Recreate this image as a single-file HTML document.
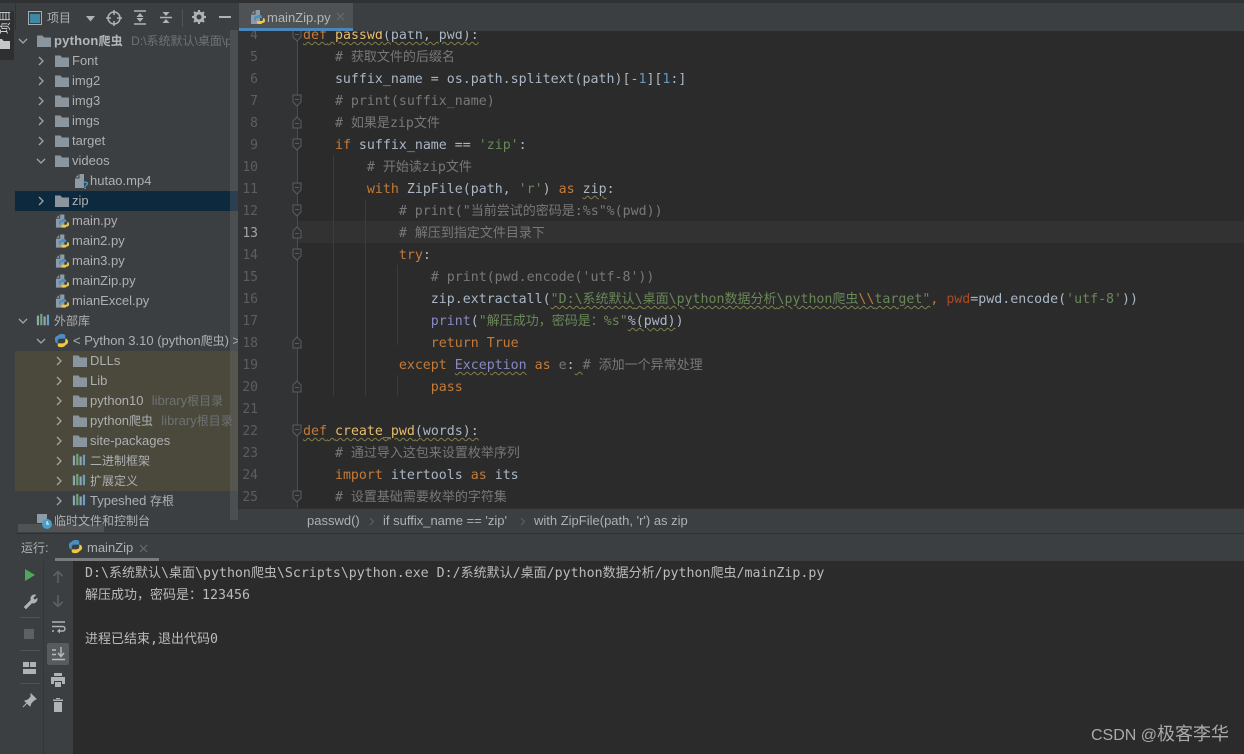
<!DOCTYPE html>
<html lang="zh"><head><meta charset="utf-8"><style>
html,body{margin:0;padding:0;background:#2b2b2b}
#a{position:relative;width:1244px;height:754px;overflow:hidden;background:#2b2b2b;font-family:"Liberation Sans","Noto Sans CJK SC",sans-serif;filter:blur(.25px)}
.b{position:absolute}
.t{position:absolute;height:20px;line-height:20px;font-size:13px;color:#aeb0b2;white-space:nowrap}
.t s{color:#6f7274;text-decoration:none;margin-left:1px}
.t i{font-style:normal;font-size:12px;line-height:0;font-family:"Noto Sans CJK SC",sans-serif}
.l{position:absolute;height:22px;line-height:22px;left:303px;margin-top:1px;font-family:"DejaVu Sans Mono","Liberation Mono","Noto Sans CJK SC",monospace;font-size:13.28px;color:#a9b7c6;white-space:pre}
.l i{font-style:normal;font-size:13px;line-height:0;font-family:"Noto Sans CJK SC",sans-serif}
.n{position:absolute;left:238px;width:20px;text-align:right;height:22px;line-height:22px;margin-top:1px;font-family:"DejaVu Sans Mono",monospace;font-size:13px;color:#5c5e60}
.k{color:#c47a38}.c{color:#787878}.s{color:#6a8759}.f{color:#e8bd6c}.p{color:#8888c6}.u{color:#6897bb}.w{text-decoration:underline wavy #7f7f4c 1px;text-underline-offset:2px}.q{color:#aa4926}
svg{position:absolute;overflow:visible}
.g{position:absolute;width:1px;background:#3c3c3c}
.con{position:absolute;left:85px;height:22px;line-height:22px;margin-top:2px;font-family:"DejaVu Sans Mono","Liberation Mono",monospace;font-size:13.28px;color:#bbbbbb;white-space:pre}
.con i{font-style:normal;font-size:13px;line-height:0;font-family:"Noto Sans CJK SC",sans-serif}
</style></head><body><div id="a">
<svg width="0" height="0" style="position:absolute"><defs>
<symbol id="fo" viewBox="0 0 16 16"><path d="M1 2.500h5.500l1.500 2h7v9.500H1z" fill="#8a959e"/></symbol>
<symbol id="ch" viewBox="0 0 10 10"><path d="M3 1l4 4-4 4" fill="none" stroke="#a2a4a6" stroke-width="1.300"/></symbol>
<symbol id="dn" viewBox="0 0 10 10"><path d="M1 3l4 4 4-4" fill="none" stroke="#a2a4a6" stroke-width="1.300"/></symbol>
<symbol id="py" viewBox="0 0 16 16"><path d="M1 5l4-4h5v14H1z" fill="#8d9ba6"/><path d="M5 1v4H1" fill="none" stroke="#3c3f41"/><path d="M9 6c3 0 3 1 3 2v1H8c-2 0-2 1-2 2v1c-2 0-2-2-2-3s1-2 3-2V7c0-1 1-1 2-1z" fill="#4a8ec2"/><path d="M10 15c-3 0-3-1-3-2v-1h4c2 0 2-1 2-2V9c2 0 2 2 2 3s-1 2-3 2v0c0 1-1 1-2 1z" fill="#f0c840"/></symbol>
<symbol id="lg" viewBox="0 0 16 16"><path d="M8 1c4 0 4 1 4 2v3H7c-3 0-3 2-3 3v2c-3 0-3-3-3-5s2-3 3-3V3c0-1 2-2 4-2z" fill="#4a8ec2"/><path d="M8 15c-4 0-4-1-4-2v-2h5c3 0 3-2 3-3V6c3 0 3 3 3 4s-2 3-3 3v0c0 1-2 2-4 2z" fill="#f0c840"/></symbol>
<symbol id="li" viewBox="0 0 16 16"><rect x="1" y="3" width="2.500" height="11" fill="#8fa5b5"/><rect x="4.800" y="1" width="2.500" height="13" fill="#6fa57a"/><rect x="8.600" y="4" width="2.500" height="10" fill="#8fa5b5"/><rect x="12.400" y="2" width="2.500" height="12" fill="#6a9fc0"/></symbol>
<symbol id="fm" viewBox="0 0 10 14"><path d="M1 1h8v7l-4 4-4-4z" fill="#2f3032" stroke="#5a5c5e"/><path d="M3 5.500h4" stroke="#5a5c5e"/></symbol>
<symbol id="fu" viewBox="0 0 10 14"><path d="M1 13h8V6L5 2 1 6z" fill="#2f3032" stroke="#5a5c5e"/><path d="M3 8.500h4" stroke="#5a5c5e"/></symbol>
</defs></svg>

<div class="b" style="left:0;top:0;width:1244px;height:3px;background:#2f3133"></div>
<div class="b" style="left:0;top:3px;width:238px;height:27px;background:#3c3f41"></div>
<div class="b" style="left:238px;top:3px;width:1006px;height:27px;background:#3c3f41"></div>
<div class="b" style="left:0;top:3px;width:15px;height:751px;background:#3c3f41;border-right:1px solid #323232"></div>
<div class="b" style="left:0;top:11px;width:14px;height:49px;background:#2d2f31;overflow:hidden">
<div class="b" style="left:-7px;top:5px;width:24px;height:12px;font-size:12px;line-height:12px;color:#d0d2d4;transform:rotate(-90deg);white-space:nowrap;font-family:'Noto Sans CJK SC',sans-serif">项目</div>
<svg style="left:-4px;top:27px" width="14" height="12"><path d="M0 1h6l1.500 2H14v8H0z" fill="#c4c6c8"/></svg>
</div>

<div class="b" style="left:15px;top:30px;width:223px;height:503px;background:#3c3f41"></div>
<div class="b" style="left:15px;top:191px;width:223px;height:20px;background:#0d293e"></div>
<div class="b" style="left:15px;top:351px;width:223px;height:140px;background:#4a493c"></div>
<div class="b" style="left:230px;top:30px;width:8px;height:490px;background:rgba(120,122,124,.28)"></div>
<div class="b" style="left:18px;top:524px;width:86px;height:8px;background:#505254"></div>

<!-- toolbar -->
<svg style="left:28px;top:11px" width="14" height="14"><rect x=".5" y=".5" width="13" height="13" fill="none" stroke="#a9abad"/><rect x="2" y="3" width="10" height="9" fill="#3d88a5"/></svg>
<div class="t" style="left:47px;top:8px"><i>项目</i></div>
<svg style="left:85px;top:15px" width="11" height="7"><path d="M1 1h9L5.500 6.500z" fill="#b0b2b4"/></svg>
<svg style="left:106px;top:10px" width="16" height="16"><circle cx="8" cy="8" r="6" fill="none" stroke="#b0b2b4" stroke-width="1.500"/><path d="M8 0v5M8 11v5M0 8h5M11 8h5" stroke="#b0b2b4" stroke-width="1.500"/></svg>
<svg style="left:133px;top:10px" width="14" height="15"><path d="M1 1h12M1 14h12" stroke="#b0b2b4" stroke-width="1.500"/><path d="M7 3L3.500 7h7zM7 12L3.500 8h7z" fill="#b0b2b4"/></svg>
<svg style="left:159px;top:10px" width="14" height="15"><path d="M1 7.500h12" stroke="#b0b2b4" stroke-width="1.500"/><path d="M7 6L3.500 2h7zM7 9L3.500 13h7z" fill="#b0b2b4"/></svg>
<div class="b" style="left:182px;top:9px;width:1px;height:18px;background:#505254"></div>
<svg style="left:192px;top:10px" width="14" height="14"><circle cx="7" cy="7" r="4" fill="none" stroke="#b0b2b4" stroke-width="3"/><path d="M7 0v3M7 11v3M0 7h3M11 7h3M2 2l2 2M10 10l2 2M2 12l2-2M10 4l2-2" stroke="#b0b2b4" stroke-width="2"/></svg>
<div class="b" style="left:219px;top:16px;width:12px;height:2px;background:#b0b2b4"></div>

<!-- tree -->
<svg style="left:18px;top:36px" width="10" height="10"><use href="#dn"/></svg>
<svg style="left:36px;top:33px" width="16" height="16"><use href="#fo"/></svg>
<div class="t" style="left:54px;top:31px;width:176px;overflow:hidden"><b style="color:#b4b6b8;letter-spacing:.2px">python<i>爬虫</i></b>&nbsp; <s style="font-size:12px">D:\<i>系统默认</i>\<i>桌面</i>\py</s></div>

<svg style="left:36px;top:56px" width="10" height="10"><use href="#ch"/></svg><svg style="left:54px;top:53px" width="16" height="16"><use href="#fo"/></svg><div class="t" style="left:72px;top:51px">Font</div>
<svg style="left:36px;top:76px" width="10" height="10"><use href="#ch"/></svg><svg style="left:54px;top:73px" width="16" height="16"><use href="#fo"/></svg><div class="t" style="left:72px;top:71px">img2</div>
<svg style="left:36px;top:96px" width="10" height="10"><use href="#ch"/></svg><svg style="left:54px;top:93px" width="16" height="16"><use href="#fo"/></svg><div class="t" style="left:72px;top:91px">img3</div>
<svg style="left:36px;top:116px" width="10" height="10"><use href="#ch"/></svg><svg style="left:54px;top:113px" width="16" height="16"><use href="#fo"/></svg><div class="t" style="left:72px;top:111px">imgs</div>
<svg style="left:36px;top:136px" width="10" height="10"><use href="#ch"/></svg><svg style="left:54px;top:133px" width="16" height="16"><use href="#fo"/></svg><div class="t" style="left:72px;top:131px">target</div>
<svg style="left:36px;top:156px" width="10" height="10"><use href="#dn"/></svg><svg style="left:54px;top:153px" width="16" height="16"><use href="#fo"/></svg><div class="t" style="left:72px;top:151px">videos</div>
<svg style="left:74px;top:173px" width="15" height="16"><path d="M1 5l4-4h5v14H1z" fill="#8d9ba6"/><path d="M5 1v4H1" fill="none" stroke="#3c3f41"/><text x="8" y="16" font-size="11" font-weight="bold" fill="#4a9ec8" font-family="Liberation Sans">?</text></svg><div class="t" style="left:90px;top:171px">hutao.mp4</div>
<svg style="left:36px;top:196px" width="10" height="10"><use href="#ch"/></svg><svg style="left:54px;top:193px" width="16" height="16"><use href="#fo"/></svg><div class="t" style="left:72px;top:191px">zip</div>
<svg style="left:55px;top:213px" width="15" height="16"><use href="#py"/></svg><div class="t" style="left:72px;top:211px">main.py</div>
<svg style="left:55px;top:233px" width="15" height="16"><use href="#py"/></svg><div class="t" style="left:72px;top:231px">main2.py</div>
<svg style="left:55px;top:253px" width="15" height="16"><use href="#py"/></svg><div class="t" style="left:72px;top:251px">main3.py</div>
<svg style="left:55px;top:273px" width="15" height="16"><use href="#py"/></svg><div class="t" style="left:72px;top:271px">mainZip.py</div>
<svg style="left:55px;top:293px" width="15" height="16"><use href="#py"/></svg><div class="t" style="left:72px;top:291px">mianExcel.py</div>
<svg style="left:18px;top:316px" width="10" height="10"><use href="#dn"/></svg><svg style="left:36px;top:313px" width="14" height="14"><use href="#li"/></svg><div class="t" style="left:54px;top:311px"><i>外部库</i></div>
<svg style="left:36px;top:336px" width="10" height="10"><use href="#dn"/></svg><svg style="left:54px;top:333px" width="15" height="15"><use href="#lg"/></svg><div class="t" style="left:73px;top:331px;width:165px;overflow:hidden">&lt; Python 3.10 (python<i>爬虫</i>) &gt;</div>
<svg style="left:54px;top:356px" width="10" height="10"><use href="#ch"/></svg><svg style="left:72px;top:353px" width="16" height="16"><use href="#fo"/></svg><div class="t" style="left:90px;top:351px">DLLs</div>
<svg style="left:54px;top:376px" width="10" height="10"><use href="#ch"/></svg><svg style="left:72px;top:373px" width="16" height="16"><use href="#fo"/></svg><div class="t" style="left:90px;top:371px">Lib</div>
<svg style="left:54px;top:396px" width="10" height="10"><use href="#ch"/></svg><svg style="left:72px;top:393px" width="16" height="16"><use href="#fo"/></svg><div class="t" style="left:90px;top:391px">python10 &nbsp;<s>library<i>根目录</i></s></div>
<svg style="left:54px;top:416px" width="10" height="10"><use href="#ch"/></svg><svg style="left:72px;top:413px" width="16" height="16"><use href="#fo"/></svg><div class="t" style="left:90px;top:411px">python<i>爬虫</i> &nbsp;<s>library<i>根目录</i></s></div>
<svg style="left:54px;top:436px" width="10" height="10"><use href="#ch"/></svg><svg style="left:72px;top:433px" width="16" height="16"><use href="#fo"/></svg><div class="t" style="left:90px;top:431px">site-packages</div>
<svg style="left:54px;top:456px" width="10" height="10"><use href="#ch"/></svg><svg style="left:72px;top:453px" width="14" height="14"><use href="#li"/></svg><div class="t" style="left:90px;top:451px"><i>二进制框架</i></div>
<svg style="left:54px;top:476px" width="10" height="10"><use href="#ch"/></svg><svg style="left:72px;top:473px" width="14" height="14"><use href="#li"/></svg><div class="t" style="left:90px;top:471px"><i>扩展定义</i></div>
<svg style="left:54px;top:496px" width="10" height="10"><use href="#ch"/></svg><svg style="left:72px;top:493px" width="14" height="14"><use href="#li"/></svg><div class="t" style="left:90px;top:491px">Typeshed <i>存根</i></div>
<svg style="left:36px;top:513px" width="16" height="16"><path d="M1 1h10v9H1z" fill="#8d9ba6"/><circle cx="11" cy="11" r="5" fill="#4a9ec8"/><path d="M11 8v3h2" stroke="#fff" fill="none"/></svg><div class="t" style="left:54px;top:511px"><i>临时文件和控制台</i></div>

<!-- editor -->
<div class="b" style="left:238px;top:31px;width:60px;height:477px;background:#313335"></div>
<div class="b" style="left:298px;top:221px;width:946px;height:22px;background:#323232"></div>
<div class="g" style="left:297px;top:31px;height:477px;background:#4a4c4e"></div>
<div class="g" style="left:333px;top:155px;height:241px"></div>
<div class="g" style="left:365px;top:199px;height:197px"></div>
<div class="g" style="left:397px;top:265px;height:80px"></div>
<div class="g" style="left:397px;top:375px;height:21px"></div>

<svg style="left:292px;top:29px" width="10" height="14"><use href="#fm"/></svg>
<svg style="left:292px;top:94px" width="10" height="14"><use href="#fm"/></svg>
<svg style="left:292px;top:115px" width="10" height="14"><use href="#fu"/></svg>
<svg style="left:292px;top:138px" width="10" height="14"><use href="#fm"/></svg>
<svg style="left:292px;top:182px" width="10" height="14"><use href="#fm"/></svg>
<svg style="left:292px;top:204px" width="10" height="14"><use href="#fm"/></svg>
<svg style="left:292px;top:225px" width="10" height="14"><use href="#fu"/></svg>
<svg style="left:292px;top:248px" width="10" height="14"><use href="#fm"/></svg>
<svg style="left:292px;top:335px" width="10" height="14"><use href="#fu"/></svg>
<svg style="left:292px;top:379px" width="10" height="14"><use href="#fu"/></svg>
<svg style="left:292px;top:424px" width="10" height="14"><use href="#fm"/></svg>
<svg style="left:292px;top:490px" width="10" height="14"><use href="#fm"/></svg>

<div class="n" style="top:24px">4</div><div class="n" style="top:46px">5</div><div class="n" style="top:68px">6</div><div class="n" style="top:90px">7</div><div class="n" style="top:112px">8</div><div class="n" style="top:134px">9</div><div class="n" style="top:156px">10</div><div class="n" style="top:178px">11</div><div class="n" style="top:200px">12</div><div class="n" style="top:222px;color:#a4a3a3">13</div><div class="n" style="top:244px">14</div><div class="n" style="top:266px">15</div><div class="n" style="top:288px">16</div><div class="n" style="top:310px">17</div><div class="n" style="top:332px">18</div><div class="n" style="top:354px">19</div><div class="n" style="top:376px">20</div><div class="n" style="top:398px">21</div><div class="n" style="top:420px">22</div><div class="n" style="top:442px">23</div><div class="n" style="top:464px">24</div><div class="n" style="top:486px">25</div>

<div class="l" style="top:24px"><span class="w"><span class="k">def</span> <span class="f">passwd</span>(path, pwd):</span></div>
<div class="l c" style="top:46px">    # <i>获取文件的后缀名</i></div>
<div class="l" style="top:68px">    suffix_name = os.path.splitext(path)[-<span class="u">1</span>][<span class="u">1</span>:]</div>
<div class="l c" style="top:90px">    # print(suffix_name)</div>
<div class="l c" style="top:112px">    # <i>如果是</i>zip<i>文件</i></div>
<div class="l" style="top:134px">    <span class="k">if</span> suffix_name == <span class="s">'zip'</span>:</div>
<div class="l c" style="top:156px">        # <i>开始读</i>zip<i>文件</i></div>
<div class="l" style="top:178px">        <span class="k">with</span> ZipFile(path, <span class="s">'r'</span>) <span class="k">as</span> <span class="w">zip</span>:</div>
<div class="l c" style="top:200px">            # print("<i>当前尝试的密码是</i>:%s"%(pwd))</div>
<div class="l c" style="top:222px">            # <i>解压到指定文件目录下</i></div>
<div class="l" style="top:244px">            <span class="k">try</span>:</div>
<div class="l c" style="top:266px">                # print(pwd.encode('utf-8'))</div>
<div class="l" style="top:288px">                zip.extractall(<span class="s w">"D:\<i>系统默认</i>\<i>桌面</i>\python<i>数据分析</i>\python<i>爬虫</i><span class="k">\\</span>target"</span><span class="k">,</span> <span class="q">pwd</span>=pwd.encode(<span class="s">'utf-8'</span>))</div>
<div class="l" style="top:310px">                <span class="p">print</span>(<span class="s">"<i>解压成功，密码是：</i>%s"</span><span class="w">%(pwd)</span>)</div>
<div class="l" style="top:332px">                <span class="k">return True</span></div>
<div class="l" style="top:354px">            <span class="k">except</span> <span class="p w">Exception</span> <span class="k">as</span> <span style="color:#777">e</span>:<span class="w"> </span><span class="c"># <i>添加一个异常处理</i></span></div>
<div class="l" style="top:376px">                <span class="k">pass</span></div>
<div class="l" style="top:420px"><span class="w"><span class="k">def</span> <span class="f">create_pwd</span>(words):</span></div>
<div class="l c" style="top:442px">    # <i>通过导入这包来设置枚举序列</i></div>
<div class="l" style="top:464px">    <span class="k">import</span> itertools <span class="k">as</span> its</div>
<div class="l c" style="top:486px">    # <i>设置基础需要枚举的字符集</i></div>
<div class="b" style="left:238px;top:3px;width:1006px;height:28px;background:#3c3f41"></div>

<!-- tab -->
<div class="b" style="left:239px;top:3px;width:114px;height:25px;background:#4e5254"></div>
<div class="b" style="left:239px;top:28px;width:114px;height:3px;background:#4a86b8"></div>
<svg style="left:250px;top:9px" width="16" height="16"><use href="#py"/></svg>
<div class="t" style="left:267px;top:8px;color:#b4b6b8">mainZip.py</div>
<svg style="left:336px;top:12px" width="9" height="9"><path d="M1 1l7 7M8 1L1 8" stroke="#6a6d70" stroke-width="1"/></svg>

<!-- breadcrumb -->
<div class="b" style="left:238px;top:508px;width:1006px;height:25px;background:#3c3f41;border-top:1px solid #323232;box-sizing:border-box"></div>
<div class="t" style="left:307px;top:511px">passwd()</div>
<div class="t" style="left:383px;top:511px">if suffix_name == 'zip'</div>
<div class="t" style="left:534px;top:511px">with ZipFile(path, 'r') as zip</div>
<svg style="left:369px;top:517px" width="6" height="9"><path d="M1 1l3.500 3.500L1 8" fill="none" stroke="#606264"/></svg>
<svg style="left:520px;top:517px" width="6" height="9"><path d="M1 1l3.500 3.500L1 8" fill="none" stroke="#606264"/></svg>

<!-- run panel -->
<div class="b" style="left:15px;top:533px;width:1229px;height:28px;background:#3c3f41;border-top:1px solid #2f3133;box-sizing:border-box"></div>
<div class="t" style="left:21px;top:538px"><i>运行</i>:</div>
<svg style="left:68px;top:539px" width="15" height="15"><use href="#lg"/></svg>
<div class="t" style="left:87px;top:538px">mainZip</div>
<svg style="left:139px;top:544px" width="9" height="9"><path d="M1 1l7 7M8 1L1 8" stroke="#6a6d70"/></svg>
<div class="b" style="left:55px;top:558px;width:104px;height:3px;background:#7a7d7f"></div>
<div class="b" style="left:15px;top:561px;width:58px;height:193px;background:#3c3f41"></div>
<div class="b" style="left:43px;top:561px;width:1px;height:193px;background:#343638"></div>

<svg style="left:24px;top:568px" width="12" height="14"><path d="M1 1l10 6-10 6z" fill="#4fa85a"/></svg>
<svg style="left:22px;top:593px" width="16" height="16"><path d="M2 14l7-7c-1-3 1-6 5-5l-3 3 2 2 2-2c1 3-2 6-5 5l-6 6z" fill="#b0b2b4" stroke="#b0b2b4" stroke-width=".500"/></svg>
<div class="b" style="left:20px;top:617px;width:20px;height:1px;background:#505254"></div>
<div class="b" style="left:24px;top:629px;width:10px;height:10px;background:#5e6062"></div>
<div class="b" style="left:20px;top:650px;width:20px;height:1px;background:#505254"></div>
<svg style="left:23px;top:662px" width="13" height="12"><path d="M0 0h6v5H0zM7 0h6v5H7zM0 7h13v5H0z" fill="#b0b2b4"/></svg>
<div class="b" style="left:20px;top:683px;width:20px;height:1px;background:#505254"></div>
<svg style="left:22px;top:693px" width="15" height="15"><path d="M9 1l5 5-2 1-3 3-1 3-5-5 3-1 3-3zM5 10l-4 4" fill="#b0b2b4" stroke="#b0b2b4"/></svg>

<svg style="left:52px;top:570px" width="12" height="13"><path d="M6 13V2M1.500 6L6 1.500 10.500 6" fill="none" stroke="#5e6062" stroke-width="1.600"/></svg>
<svg style="left:52px;top:595px" width="12" height="13"><path d="M6 0v11M1.500 7L6 11.500 10.500 7" fill="none" stroke="#5e6062" stroke-width="1.600"/></svg>
<svg style="left:52px;top:621px" width="13" height="14"><path d="M0 1h13M0 5.500h11c2.500 0 2.500 4.500 0 4.500H7M0 10h2" fill="none" stroke="#b0b2b4" stroke-width="1.400"/><path d="M8 7.500L5 10l3 2.500z" fill="#b0b2b4"/></svg>
<div class="b" style="left:47px;top:643px;width:22px;height:22px;border-radius:2px;background:#585b5d"></div>
<svg style="left:52px;top:647px" width="13" height="13"><path d="M0 12.500h13M0 3h4M0 7.500h4M9 0v9M6 6l3 3.500L12 6" fill="none" stroke="#b8babc" stroke-width="1.400"/></svg>
<svg style="left:51px;top:673px" width="14" height="14"><path d="M3 0h8v3H3zM0 4h14v7h-3V8H3v3H0zM4 9h6v5H4z" fill="#b0b2b4"/></svg>
<svg style="left:53px;top:698px" width="10" height="14"><path d="M0 1.500h10v1.500H0zM3 0h4v1H3zM1 4h8v10H1z" fill="#b0b2b4"/></svg>

<div class="con" style="top:561px">D:\<i>系统默认</i>\<i>桌面</i>\python<i>爬虫</i>\Scripts\python.exe D:/<i>系统默认</i>/<i>桌面</i>/python<i>数据分析</i>/python<i>爬虫</i>/mainZip.py</div>
<div class="con" style="top:583px"><i>解压成功，密码是：</i>123456</div>
<div class="con" style="top:627px"><i>进程已结束</i>,<i>退出代码</i>0</div>

<div class="b" style="left:1091px;top:725px;font-size:16px;line-height:22px;color:#aaaaaa;white-space:nowrap">CSDN @<span style="font-size:18px;line-height:0;font-family:'Noto Sans CJK SC',sans-serif">极客李华</span></div>
</div></body></html>
